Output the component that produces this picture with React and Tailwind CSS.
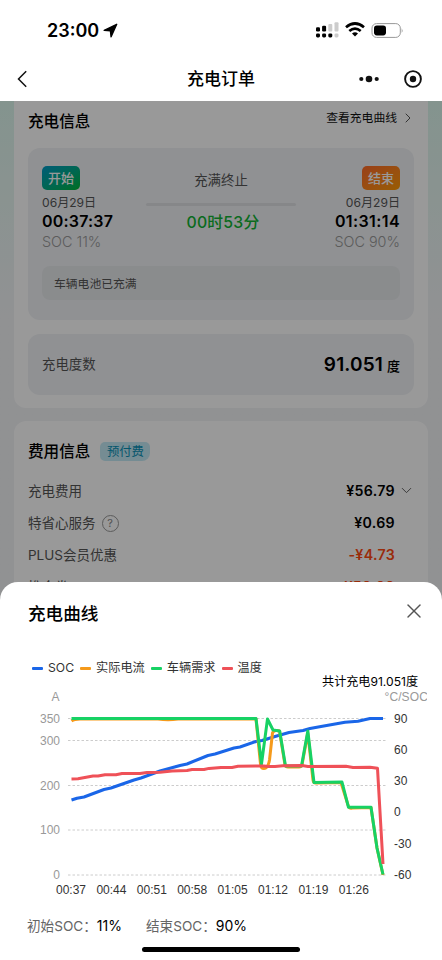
import React from 'react';
import { ChevronDown, ChevronRight, X } from 'lucide-react';

const legend = [
  { name: 'SOC', color: 'bg-[#1a66e8]' },
  { name: '实际电流', color: 'bg-[#f59a1b]' },
  { name: '车辆需求', color: 'bg-[#17d264]' },
  { name: '温度', color: 'bg-[#ef5158]' },
];

const leftAxis = [
  { label: '350', y: 28.5 },
  { label: '300', y: 50.5 },
  { label: '200', y: 95.5 },
  { label: '100', y: 140 },
  { label: '0', y: 185 },
];

const rightAxis = ['90', '60', '30', '0', '-30', '-60'];

const times = ['00:37', '00:44', '00:51', '00:58', '01:05', '01:12', '01:19', '01:26'];

const socLine =
  '71.5,110 77,108.2 84,107 104,99.5 111,98 134,90 141,88 160,81 180,75.5 187,74 208,65.5 215,64 234,58 240,57 256,51.5 262,50.5 275,46.5 289,42.5 303,40.5 310,38.5 321,36.5 345,32.2 358,31.2 370,28.5 383,28.5';
const tempLine =
  '71.5,89 78,88.8 93,86 98,86 105,84.7 116,84.7 122,83.6 140,83.6 147,82.4 160,82.3 172,81 187,80.5 192,79.5 204,79.5 209,78.4 221,77.5 232,77.5 238,76.3 264,76 268,76.5 275,76.5 283,75.8 302,75.5 308,76.4 346,76.3 353,77.4 370,77.3 377.5,78.3 383,174';
const currentPath =
  'M71.5 31 Q74 29 80 29 L158 29 Q168 30.5 178 29 L256 29 L260.5 74 Q261 78.5 264 78.5 Q268 78.5 269.5 70 L272.5 43 Q273.5 40 277 40.5 L279.5 41 L285 75 Q285.5 77 288 77 L299 77 Q301.5 77 302 75 L307.8 43 L313 90 Q313.5 93.5 316 93 L341 92.5 L348 115 Q349 119 352 118 L371 117.5 L377 158 L383 185';
const demandLine =
  '71.5,28.5 256,28.5 261.5,74 267.5,29 273,40 279.7,41 285.5,76 301.5,76 307.8,41 314,92.5 342,92 348.5,117.3 371,117.3 377,158 383,184.5';

const StatusBar = () => (
  <div className="flex h-14 items-center justify-between pt-1 pr-[38px] pl-[47px]">
    <div className="flex items-center gap-1">
      <span className="text-[18px] font-semibold">23:00</span>
      <svg className="h-[15px] w-[15px]" viewBox="0 0 15 15">
        <path d="M13.7 1.3 L1.2 7.4 L7.4 7.7 L8.1 13.8 Z" fill="#000" stroke="#000" strokeWidth="1.4" strokeLinejoin="round" />
      </svg>
    </div>
    <div className="flex items-center gap-2">
      <svg className="-mt-px h-4 w-[23px]" viewBox="0 0 23 16">
        <rect x="0" y="5.2" width="4" height="4.2" rx="1.2" />
        <rect x="6.1" y="3.7" width="4" height="5.7" rx="1.2" />
        <rect x="12.3" y="2" width="4" height="7.4" rx="1" fill="#ccc" />
        <rect x="18.5" y="0.2" width="4" height="9.2" rx="1" fill="#ccc" />
        <rect x="0" y="11.4" width="4" height="4.1" rx="1.4" />
        <rect x="6.1" y="11.4" width="4" height="4.1" rx="1.4" />
        <rect x="12.3" y="11.4" width="4" height="4.1" rx="1.4" />
        <rect x="18.5" y="11.4" width="4" height="4.1" rx="1.4" fill="#ccc" />
      </svg>
      <svg className="-mt-0.5 -ml-0.5 h-[15px] w-5" viewBox="0 0 20 15" fill="none" stroke="#000" strokeWidth="2.7">
        <path d="M1 5.3 Q10 -2.3 19 5.3" />
        <path d="M4.3 9 Q10 4.2 15.7 9" />
        <path d="M7 11.4 Q10 9 13 11.4 L10 14.5 Z" fill="#000" stroke="none" />
      </svg>
      <svg className="-ml-0.5 h-[15px] w-[33px]" viewBox="0 0 33 15">
        <rect x="1" y="0.6" width="28.3" height="13.8" rx="4.5" fill="#fff" stroke="#999" />
        <rect x="3" y="2.6" width="12" height="9.8" rx="2.8" />
        <path d="M30.7 5 Q32.4 7.5 30.7 10 Z" fill="#999" />
      </svg>
    </div>
  </div>
);

const NavBar = () => (
  <div className="grid h-[45px] grid-cols-3 items-center px-4">
    <svg className="h-[18px] w-3" viewBox="0 0 12 18" fill="none" stroke="#111" strokeWidth="1.5">
      <path d="M10.2 1.2 L2.5 9 L10.2 16.8" />
    </svg>
    <h1 className="pt-0.5 text-center text-[17px] font-medium">充电订单</h1>
    <div className="flex items-center justify-end gap-[25px]">
      <svg className="h-2 w-5" viewBox="0 0 20 8" fill="#111">
        <circle cx="2.3" cy="4" r="2.1" />
        <circle cx="10" cy="4" r="3.3" />
        <circle cx="17.7" cy="4" r="2.1" />
      </svg>
      <svg className="mr-1 h-[18px] w-[18px]" viewBox="0 0 18 18">
        <circle cx="9" cy="9" r="7.9" fill="none" stroke="#111" strokeWidth="1.9" />
        <circle cx="9" cy="9" r="3.2" fill="#111" />
      </svg>
    </div>
  </div>
);

const ChargeInfo = () => (
  <section className="rounded-b-xl bg-white px-3.5 pb-[13px]">
    <div className="flex h-[47px] justify-between pt-[11px] leading-5">
      <h2 className="text-[15.6px] font-medium">充电信息</h2>
      <button className="-mt-1 -mr-0.5 flex h-5 items-center gap-[3px] text-[11.8px] text-[#111]">
        查看充电曲线
        <ChevronRight className="h-4 w-4 text-[#555]" strokeWidth={1.5} />
      </button>
    </div>
    <div className="h-[172px] rounded-xl bg-[#f0f2f5] px-3.5 pt-[18px]">
      <div className="flex h-[100px] justify-between">
        <div className="flex w-[90px] flex-col items-start">
          <span className="flex h-6 w-[38px] items-center justify-center rounded-[5px] bg-linear-to-br from-[#0099c8] to-[#00b72b] pt-px text-[13px] font-medium text-white">
            开始
          </span>
          <span className="mt-1 text-[12.1px] leading-[18px] text-[#555]">06月29日</span>
          <span className="-mt-px text-[16px] leading-5 font-semibold tracking-[0.2px]">00:37:37</span>
          <span className="text-[14.4px] leading-[21px] font-light text-[#999]">SOC 11%</span>
        </div>
        <div className="flex w-[150px] flex-col items-center pt-1">
          <span className="text-[13.4px] leading-5 text-[#555]">充满终止</span>
          <span className="mt-[13px] h-[3px] w-full rounded-full bg-[#dfe1e5]" />
          <span className="mt-[7px] -mr-1 text-[15.8px] leading-5 font-medium tracking-[0.2px] text-[#12b234]">00时53分</span>
        </div>
        <div className="flex w-[90px] flex-col items-end">
          <span className="flex h-6 w-[38px] items-center justify-center rounded-[5px] bg-linear-to-br from-[#ff6a28] to-[#ff9a00] pt-px text-[13px] font-medium text-white">
            结束
          </span>
          <span className="mt-1 text-[12.1px] leading-[18px] text-[#555]">06月29日</span>
          <span className="-mt-px text-[16px] leading-5 font-semibold tracking-[0.4px]">01:31:14</span>
          <span className="text-[14.4px] leading-[21px] font-light text-[#999]">SOC 90%</span>
        </div>
      </div>
      <div className="flex h-[34px] items-center rounded-lg bg-[#e7e9ec] px-3 pt-[3px] text-[11.8px] text-[#555]">
        车辆电池已充满
      </div>
    </div>
    <div className="mt-3.5 flex h-[61px] items-center justify-between rounded-xl bg-[#f0f2f5] px-3.5">
      <span className="text-[13.4px] text-[#555]">充电度数</span>
      <div className="flex items-baseline gap-1 pt-0.5">
        <span className="text-[19px] font-semibold tracking-[0.15px]">91.051</span>
        <span className="text-[13px] font-medium">度</span>
      </div>
    </div>
  </section>
);

const FeeRow = ({ label, value, help, arrow, discount }) => (
  <div className="flex h-8 items-center justify-between">
    <span className="flex items-center gap-1.5 text-[13.5px] text-[#555]">
      {label}
      {help && (
        <span className="flex h-[17px] w-[17px] items-center justify-center rounded-full border border-[#999] text-[11px] text-[#888]">
          ?
        </span>
      )}
    </span>
    <span className="flex items-center">
      <span className={discount ? 'text-[14.2px] font-semibold tracking-[0.3px] text-[#ff4a12]' : 'text-[14.2px] font-semibold tracking-[0.3px]'}>{value}</span>
      <span className="flex w-[19px] justify-end">
        {arrow && <ChevronDown className="-mr-px h-[17px] w-[17px] text-[#555]" strokeWidth={1.3} />}
      </span>
    </span>
  </div>
);

const FeeInfo = () => (
  <section className="mt-[13px] h-[300px] rounded-xl bg-white px-3.5 pt-[21px]">
    <div className="mb-[13px] flex h-5 items-center gap-2.5">
      <h2 className="text-[15.6px] font-medium">费用信息</h2>
      <span className="-mt-px flex h-[19px] w-[50px] items-center justify-center rounded-[5px] rounded-br-lg bg-[#c4eaf5] pt-0.5 text-[12.3px] text-[#078fb5]">
        预付费
      </span>
    </div>
    <FeeRow label="充电费用" value="¥56.79" arrow />
    <FeeRow label="特省心服务" value="¥0.69" help />
    <FeeRow label="PLUS会员优惠" value="-¥4.73" discount />
    <FeeRow label="推合券" value="-¥50.00" discount />
  </section>
);

const Chart = () => (
  <svg className="block h-[215px] w-[442px]" viewBox="0 0 442 215" fontFamily="'Liberation Sans', sans-serif" fontSize="12">
    <defs>
      <clipPath id="unit">
        <rect x="380" y="0" width="47" height="20" />
      </clipPath>
    </defs>
    <text x="51.5" y="11" fill="#999">A</text>
    <text x="384.5" y="11" fill="#999" clipPath="url(#unit)" letterSpacing="0.1">°C/SOC</text>
    {leftAxis.map((item) => (
      <g key={item.label}>
        <text x="60" y={item.y + 4.2} textAnchor="end" fill="#999">{item.label}</text>
        <line x1="68" x2="387" y1={item.y} y2={item.y} stroke="#ccc" strokeDasharray="2.5 2" />
      </g>
    ))}
    {rightAxis.map((label, i) => (
      <text key={label} x="394" y={32.5 + i * 31.3} fill="#333">{label}</text>
    ))}
    {times.map((time, i) => (
      <text key={time} x={71 + i * 40.4} y="203.5" textAnchor="middle" fill="#333">{time}</text>
    ))}
    <g fill="none" strokeWidth="3" strokeLinejoin="round">
      <polyline points={socLine} stroke="#1a66e8" />
      <path d={currentPath} stroke="#f59a1b" />
      <polyline points={demandLine} stroke="#17d264" />
      <polyline points={tempLine} stroke="#ef5158" />
    </g>
  </svg>
);

const CurveSheet = () => (
  <div className="absolute inset-x-0 bottom-0 h-[378px] rounded-t-[18px] bg-white">
    <div className="flex h-[62px] items-center justify-between pr-4 pl-7">
      <h2 className="pt-0.5 text-[17.6px] font-medium">充电曲线</h2>
      <X className="-mt-1 h-6 w-6 text-[#555]" strokeWidth={1.4} />
    </div>
    <div className="mt-[15px] flex h-[18px] items-center gap-1.5 pl-8">
      {legend.map((item) => (
        <div key={item.name} className="flex items-center gap-[5px] text-[12.2px] text-[#333]">
          <span className={`h-[3px] w-[11px] rounded-[1px] ${item.color}`} />
          {item.name}
        </div>
      ))}
    </div>
    <div className="-mt-0.5 flex h-3.5 items-center justify-end pr-6 text-[12.1px] text-black">共计充电91.051度</div>
    <div className="pt-px">
      <Chart />
    </div>
    <div className="mt-[11px] flex h-5 items-center gap-6 pl-[27px] text-[13.6px] text-[#666]">
      <span>初始SOC：<b className="text-[14px] font-normal text-black">11%</b></span>
      <span>结束SOC：<b className="text-[14px] font-normal text-black">90%</b></span>
    </div>
    <div className="mx-auto mt-[11px] h-[5px] w-[158px] rounded-full bg-black" />
  </div>
);

const App = () => {
  return (
    <div className="relative flex h-[960px] w-[442px] flex-col overflow-hidden bg-white font-[Inter,'Noto_Sans_CJK_SC',sans-serif] text-black">
      <StatusBar />
      <NavBar />
      <main className="relative h-[859px] overflow-hidden bg-[#f2f3f6] bg-linear-to-b from-[#dcf7ed] to-[#f2f3f6] to-25% px-3.5">
        <ChargeInfo />
        <FeeInfo />
        <div className="absolute inset-0 bg-black/40" />
      </main>
      <CurveSheet />
    </div>
  );
};

export default App;
